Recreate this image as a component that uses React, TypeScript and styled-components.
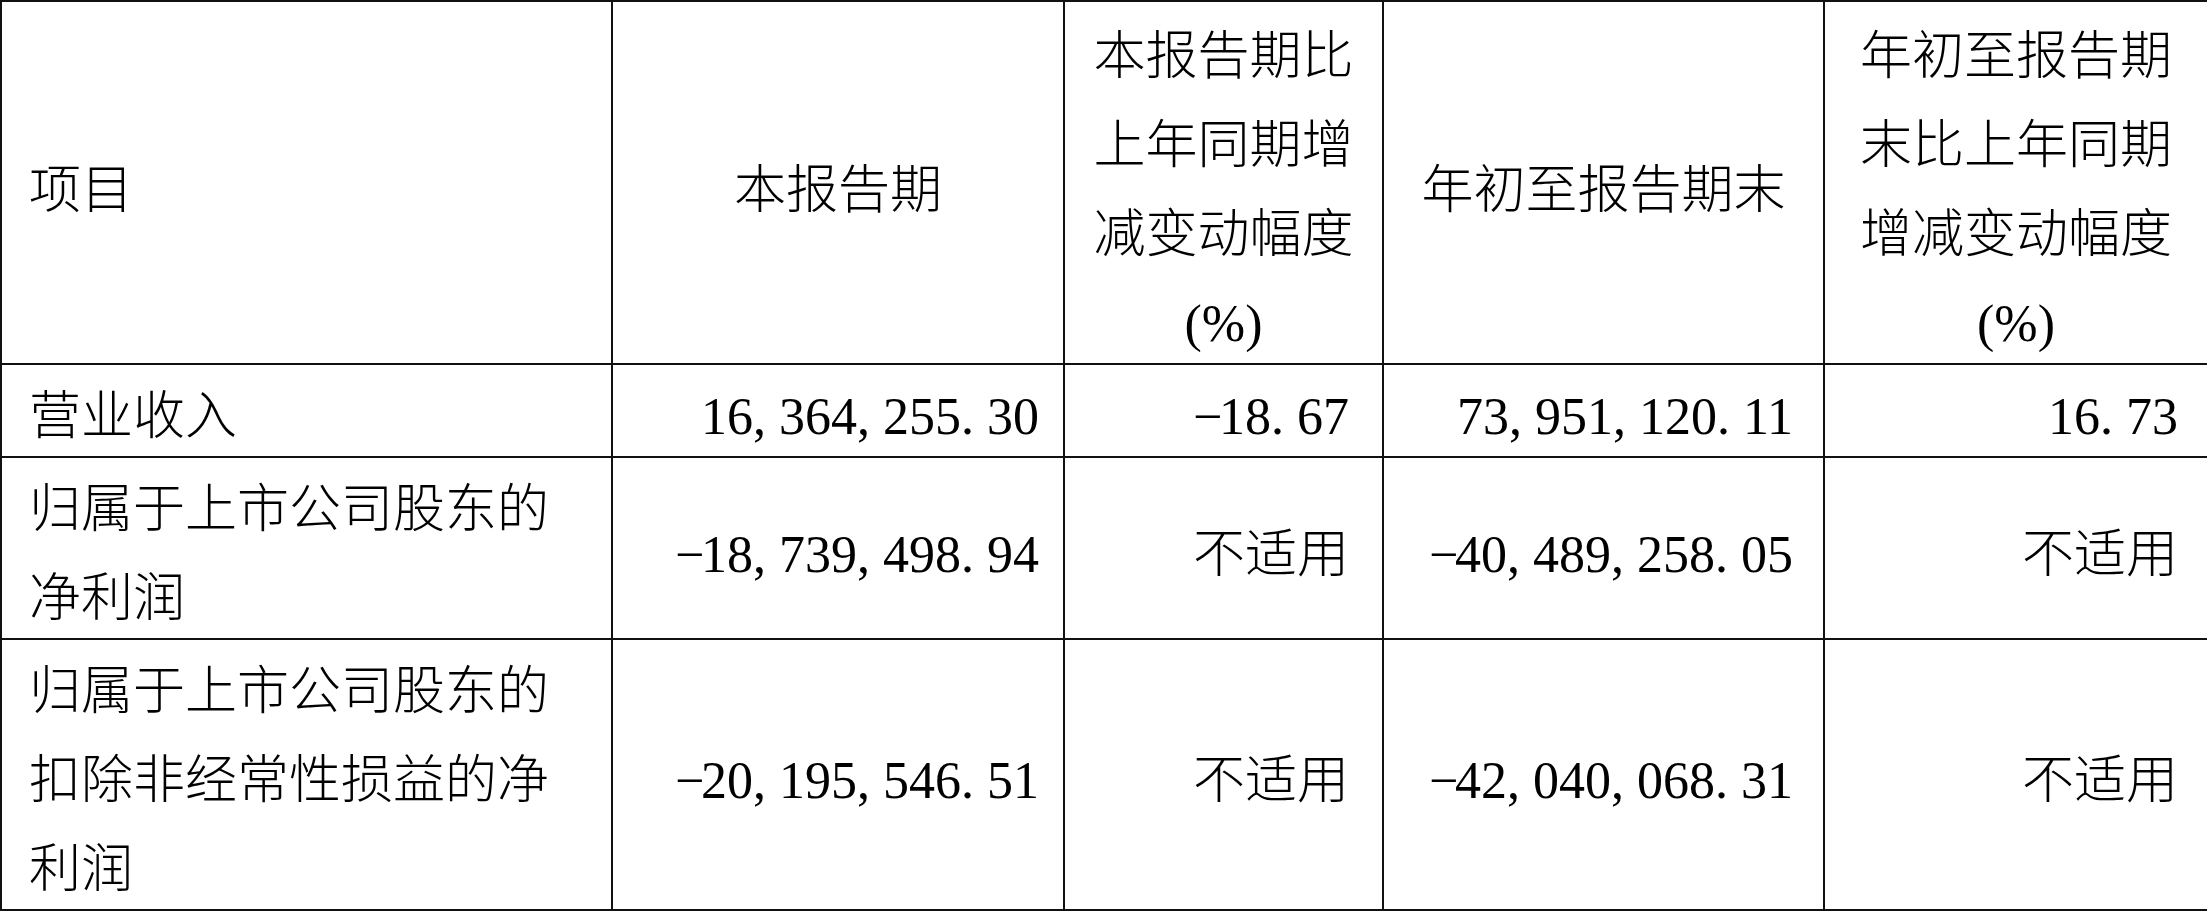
import styled, { createGlobalStyle } from "styled-components";

const GlobalStyle = createGlobalStyle`
    html, body {
        margin: 0;
        padding: 0;
        background: #fff;
    }
`;

type Row = {
    label: string[];
    values: string[];
    height: number;
};

const rows: Row[] = [
    {
        label: ["营业收入"],
        values: ["16,364,255.30", "-18.67", "73,951,120.11", "16.73"],
        height: 91,
    },
    {
        label: ["归属于上市公司股东的", "净利润"],
        values: ["-18,739,498.94", "不适用", "-40,489,258.05", "不适用"],
        height: 179,
    },
    {
        label: ["归属于上市公司股东的", "扣除非经常性损益的净", "利润"],
        values: ["-20,195,546.51", "不适用", "-42,040,068.31", "不适用"],
        height: 270,
    },
];

const columns = [611, 452, 319, 441, 384];
const rightPad = [0, 24, 33, 30, 29];

// 数字按宋体半角的等宽方式排：逗号、小数点、负号各占半个字宽
const Amount = ({ text }: { text: string }) => {
    if (!/^-?[\d,.]+$/.test(text)) return <>{text}</>;
    return (
        <Latin>
            {text.split("").map((ch, i) => {
                if (ch === "," || ch === ".") return <Sep key={i}>{ch}</Sep>;
                if (ch === "-") return <Sep key={i}>−</Sep>;
                return ch;
            })}
        </Latin>
    );
};

export default function App() {
    return (
        <>
            <GlobalStyle />
            <Table>
                <colgroup>
                    {columns.map((w, i) => (
                        <col key={i} style={{ width: w }} />
                    ))}
                </colgroup>
                <tbody>
                    <HeadRow>
                        <Head $align="left">项目</Head>
                        <Head>本报告期</Head>
                        <Head>
                            本报告期比
                            <br />
                            上年同期增
                            <br />
                            减变动幅度
                            <br />
                            <Latin>(%)</Latin>
                        </Head>
                        <Head>年初至报告期末</Head>
                        <Head>
                            年初至报告期
                            <br />
                            末比上年同期
                            <br />
                            增减变动幅度
                            <br />
                            <Latin>(%)</Latin>
                        </Head>
                    </HeadRow>
                    {rows.map((row, r) => (
                        <BodyRow key={r} $h={row.height}>
                            <Label>
                                {row.label.map((line, i) => (
                                    <span key={i}>
                                        {i > 0 && <br />}
                                        {line}
                                    </span>
                                ))}
                            </Label>
                            {row.values.map((v, c) => (
                                <Value key={c} $pad={rightPad[c + 1]}>
                                    <Amount text={v} />
                                </Value>
                            ))}
                        </BodyRow>
                    ))}
                </tbody>
            </Table>
        </>
    );
}

const Table = styled.table`
    width: 2207px;
    table-layout: fixed;
    border-collapse: collapse;
    font-family: "Noto Sans CJK SC", "Liberation Serif", sans-serif;
    font-weight: 300;
    font-size: 52px;
    line-height: 89px;
    color: #000;
`;

const HeadRow = styled.tr`
    height: 361px;
`;

const BodyRow = styled.tr<{ $h: number }>`
    height: ${(p) => p.$h}px;
`;

const Cell = styled.td`
    border: 2px solid #111;
    padding: 0;
    vertical-align: middle;
    white-space: nowrap;
`;

const Head = styled(Cell)<{ $align?: "left" | "center" }>`
    text-align: ${(p) => p.$align ?? "center"};
    padding-left: ${(p) => (p.$align === "left" ? "27px" : "0")};
    padding-top: 5px;
`;

const Label = styled(Cell)`
    text-align: left;
    padding-left: 27px;
    padding-top: 2px;
`;

const Value = styled(Cell)<{ $pad: number }>`
    text-align: right;
    padding-right: ${(p) => p.$pad}px;
    padding-top: 2px;
`;

const Latin = styled.span`
    font-family: "Liberation Serif", serif;
    font-weight: 400;
    line-height: 1;
`;

const Sep = styled.span`
    display: inline-block;
    width: 0.5em;
    text-align: left;
`;
